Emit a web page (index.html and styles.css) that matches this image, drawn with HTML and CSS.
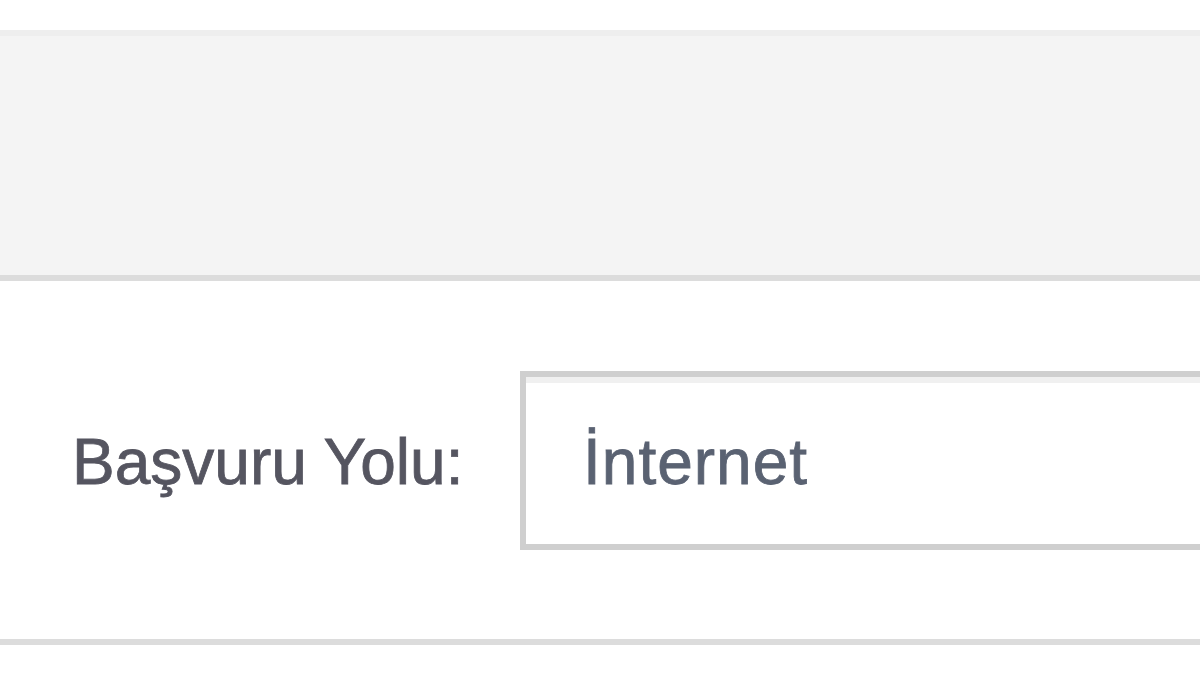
FILE: index.html
```html
<!DOCTYPE html>
<html lang="tr">
<head>
<meta charset="utf-8">
<title>Başvuru Yolu</title>
<link rel="stylesheet" href="styles.css">
</head>
<body>
<div class="page">
  <div class="panel"></div>
  <div class="row">
    <label class="label" for="yol">Başvuru Yolu:</label>
    <div class="field" id="yol">İnternet</div>
  </div>
</div>
</body>
</html>
```
FILE: styles.css
```css
html, body {
  margin: 0;
  padding: 0;
  background: #fff;
}
.page {
  padding-top: 30px;
  width: 1200px;
  overflow: hidden;
  font-family: "Liberation Sans", Arial, sans-serif;
}
.panel {
  height: 239px;
  background: #f4f4f4;
  border-top: 6px solid #eeeeee;
  border-bottom: 6px solid #dcdcdc;
}
.row {
  height: 358px;
  display: flex;
  align-items: center;
  border-bottom: 6px solid #dcdcdc;
  padding-left: 72px;
}
.label {
  width: 448px;
  flex: none;
  font-size: 64px;
  color: #555560;
  letter-spacing: 0;
  -webkit-text-stroke: 0.8px #555560;
  padding-top: 4px;
}
.field {
  flex: none;
  width: 800px;
  height: 163px;
  border: 6px solid #cfcfcf;
  box-shadow: inset 0 6px 0 #f0f0f0;
  box-sizing: content-box;
  display: flex;
  align-items: center;
  padding-left: 57px;
  padding-top: 4px;
  font-size: 64px;
  color: #5a6272;
  letter-spacing: 1px;
  -webkit-text-stroke: 0.8px #5a6272;
}
```
